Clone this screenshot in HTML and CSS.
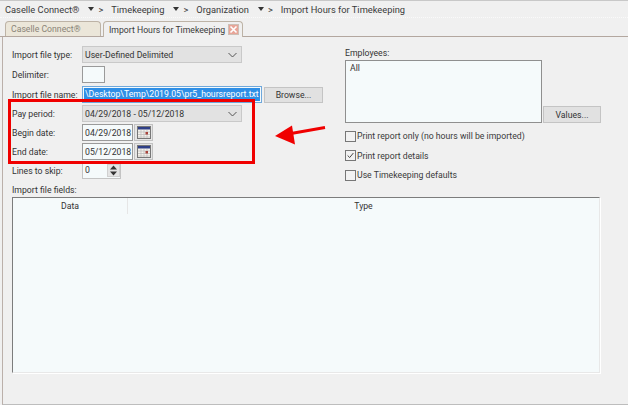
FILE: index.html
```html
<!DOCTYPE html>
<html lang="en">
<head>
<meta charset="utf-8">
<title>Import Hours for Timekeeping</title>
<link rel="stylesheet" href="styles.css">
</head>
<body>
<div class="window">
  <nav class="crumbs">
    <span class="crumb">Caselle Connect®</span><span class="caret"></span><span class="gt">&gt;</span>
    <span class="crumb">Timekeeping</span><span class="caret"></span><span class="gt">&gt;</span>
    <span class="crumb">Organization</span><span class="caret"></span><span class="gt">&gt;</span>
    <span class="crumb">Import Hours for Timekeeping</span>
  </nav>
  <div class="tabs">
    <div class="tab tab-off">Caselle Connect®</div>
    <div class="tab tab-on">Import Hours for Timekeeping
      <span class="close"><svg width="9" height="9" viewBox="0 0 9 9"><path d="M1.5 1.5l6 6M7.5 1.5l-6 6" stroke="#fff" stroke-width="1.6"/></svg></span>
    </div>
  </div>
  <main class="panel">
    <div class="top">
      <div class="left">
        <div class="row row-type">
          <label class="lbl">Import file type:</label>
          <div class="select"><span>User-Defined Delimited</span><svg class="chev" width="9" height="6" viewBox="0 0 9 6"><path d="M.5 1l4 4 4-4" fill="none" stroke="#555" stroke-width="1"/></svg></div>
        </div>
        <div class="row row-delim">
          <label class="lbl">Delimiter:</label>
          <div class="input delim"></div>
        </div>
        <div class="row row-file">
          <label class="lbl">Import file name:</label>
          <div class="input filename"><span class="sel">\Desktop\Temp\2019.05\pr5_hoursreport.txt</span></div>
          <button class="btn browse">Browse...</button>
        </div>
        <div class="row row-pay">
          <label class="lbl">Pay period:</label>
          <div class="select"><span>04/29/2018 - 05/12/2018</span><svg class="chev" width="9" height="6" viewBox="0 0 9 6"><path d="M.5 1l4 4 4-4" fill="none" stroke="#555" stroke-width="1"/></svg></div>
        </div>
        <div class="row row-date">
          <label class="lbl">Begin date:</label>
          <div class="input date">04/29/2018</div>
          <button class="calbtn"><svg width="14" height="13" viewBox="0 0 14 13"><rect x=".5" y=".5" width="13" height="12" fill="#f4f2ec" stroke="#777"/><rect x="1" y="1" width="12" height="2.5" fill="#2f3f86"/><path d="M1 6h12M1 8.500h12M1 11h12M4 4v8M7 4v8M10 4v8" stroke="#b9b9b9" stroke-width=".7"/><rect x="8.500" y="6" width="2.500" height="2.500" fill="#a8433a"/></svg></button>
        </div>
        <div class="row row-date">
          <label class="lbl">End date:</label>
          <div class="input date">05/12/2018</div>
          <button class="calbtn"><svg width="14" height="13" viewBox="0 0 14 13"><rect x=".5" y=".5" width="13" height="12" fill="#f4f2ec" stroke="#777"/><rect x="1" y="1" width="12" height="2.5" fill="#2f3f86"/><path d="M1 6h12M1 8.500h12M1 11h12M4 4v8M7 4v8M10 4v8" stroke="#b9b9b9" stroke-width=".7"/><rect x="8.500" y="6" width="2.500" height="2.500" fill="#a8433a"/></svg></button>
        </div>
        <div class="row row-skip">
          <label class="lbl">Lines to skip:</label>
          <div class="spin">
            <span class="spin-val">0</span>
            <span class="spin-btns">
              <svg width="7" height="5" viewBox="0 0 7 5"><path d="M3.500 .5L7 4.500H0z" fill="#333"/></svg>
              <svg width="7" height="5" viewBox="0 0 7 5"><path d="M3.500 4.500L7 .5H0z" fill="#333"/></svg>
            </span>
          </div>
        </div>
      </div>
      <div class="right">
        <div class="emp-label">Employees:</div>
        <div class="emp-row">
          <div class="listbox">All</div>
          <button class="btn values">Values...</button>
        </div>
        <div class="checks">
          <div class="check"><span class="box"></span>Print report only (no hours will be imported)</div>
          <div class="check"><span class="box"><svg width="11" height="11" viewBox="0 0 11 11"><path d="M2 5.500l2.500 2.500L9 2.500" fill="none" stroke="#444" stroke-width="1.200"/></svg></span>Print report details</div>
          <div class="check"><span class="box"></span>Use Timekeeping defaults</div>
        </div>
      </div>
    </div>
    <div class="fields-label">Import file fields:</div>
    <div class="grid">
      <div class="grid-head">
        <div class="col-data">Data</div>
        <div class="col-type">Type</div>
      </div>
    </div>
  </main>
  <div class="callout"></div>
  <svg class="arrow" width="56" height="26" viewBox="0 0 56 26"><path d="M52 4.500L18 10.500" stroke="#f00000" stroke-width="3"/><path d="M2 13L19 2.500l3 19z" fill="#f00000"/></svg>
</div>
</body>
</html>
```

FILE: styles.css
```css
* { box-sizing: border-box; }
html, body { margin: 0; padding: 0; }
body { width: 628px; height: 405px; overflow: hidden; background: #f0f0f0; }
.window {
  position: relative;
  width: 628px;
  height: 405px;
  display: flex;
  flex-direction: column;
  font-family: "Roboto", "Liberation Sans", sans-serif;
  font-size: 8.700px;
  white-space: nowrap;
  color: #333;
  background: #f0f0f0;
  border-top: 1px solid #c8c8c8;
}
.crumbs {
  height: 17px;
  padding-left: 5px;
  display: flex;
  align-items: center;
  font-size: 9.300px;
  color: #3a3a3a;
  border-bottom: 1px dotted #fafafa;
  flex: none;
}
.caret {
  width: 0; height: 0;
  margin-left: 9px;
  border-left: 3.500px solid transparent;
  border-right: 3.500px solid transparent;
  border-top: 4px solid #333;
}
.gt { margin: 0 8px 0 4px; }
.tabs {
  height: 19px;
  padding-left: 5px;
  display: flex;
  align-items: flex-end;
  gap: 2px;
  flex: none;
  border-bottom: 1px solid #b3a79f;
}
.tab {
  display: flex;
  align-items: center;
  height: 16px;
  border: 1px solid #bdb3a6;
  border-bottom: 0;
  border-radius: 4px 4px 0 0;
  padding: 0 3px 0 5px;
}
.tab-off { width: 96px; color: #8a8478; background: #ebe6d9; height: 15px; }
.tab-on { width: 140px; height: 16px; background: #f0f0f0; color: #3a3a3a; margin-bottom: -1px; justify-content: space-between; }
.close {
  width: 11px; height: 11px;
  display: flex; align-items: center; justify-content: center;
  background: #e8a598;
  border: 1px solid #cdbfb6;
}
.panel {
  flex: 1;
  margin-left: 2px;
  padding: 9px 0 0 9px;
  border-left: 1px solid #bbb0aa;
  border-bottom: 1px solid #bdbdbd;
  display: flex;
  flex-direction: column;
}
.top { display: flex; height: 135px; flex: none; }
.left { width: 333px; flex: none; display: flex; flex-direction: column; }
.row { display: flex; align-items: center; flex: none; }
.lbl { width: 70px; flex: none; }
.row-type { height: 17px; margin-bottom: 3px; }
.row-delim { height: 17px; margin-bottom: 3px; }
.row-file { height: 17px; margin-bottom: 2px; }
.row-pay { height: 17px; margin-bottom: 2px; }
.row-date { height: 17px; margin-bottom: 2px; }
.row-skip { height: 17px; }
.select {
  width: 160px; height: 100%;
  background: #e2e2e2;
  border: 1px solid #c9c9c9;
  display: flex;
  align-items: center;
  justify-content: space-between;
  padding: 0 4px 0 2px;
}
.input {
  background: #f5fafb;
  border: 1px solid #9a9a9a;
  height: 100%;
}
.delim { width: 23px; }
.filename {
  width: 180px;
  padding: 1px;
  overflow: hidden;
  border-color: #6fa8dc;
  display: flex;
  align-items: center;
}
.sel {
  background: #2f8fe6;
  color: #fff;
  white-space: nowrap;
  line-height: 13px;
  padding-left: 1px;
  flex: 1;
}
.btn {
  font: inherit;
  color: #333;
  background: #e1e1e1;
  border: 1px solid #c4c4c4;
  padding: 0;
}
.browse { width: 59px; height: 16px; margin-left: 2px; }
.date {
  width: 51px;
  display: flex;
  align-items: center;
  padding-left: 2px;
}
.calbtn {
  width: 19px; height: 100%;
  margin-left: 1px;
  padding: 0;
  background: #e6e6e6;
  border: 1px solid #c2c2c2;
  display: flex;
  align-items: center;
  justify-content: center;
}
.spin {
  width: 39px; height: 100%;
  background: #f5fafb;
  border: 1px solid #c4c4c4;
  display: flex;
  justify-content: space-between;
}
.spin-val { padding-left: 2px; line-height: 15px; }
.spin-btns {
  width: 13px;
  margin: 1px 0 1px 0;
  background: #e4e4e4;
  border: 1px solid #d0d0d0;
  display: flex;
  flex-direction: column;
  align-items: center;
  justify-content: space-around;
}
.right { flex: 1; padding-right: 28px; }
.emp-label { height: 14px; line-height: 14px; }
.emp-row { display: flex; align-items: flex-end; }
.listbox {
  width: 197px; height: 63px;
  background: #f5fafb;
  border: 1px solid #8f8f8f;
  padding: 2px 4px;
}
.values { width: 58px; height: 17px; margin-left: 1px; }
.checks { margin-top: 7px; display: flex; flex-direction: column; gap: 7.500px; }
.check { display: flex; align-items: center; height: 12px; color: #3a3a3a; }
.box {
  width: 11px; height: 11px;
  flex: none;
  margin-right: 1px;
  background: #f2f2f2;
  border: 1px solid #777;
  display: flex;
  align-items: center;
  justify-content: center;
}
.fields-label { height: 13px; line-height: 13px; margin-top: 3px; flex: none; }
.grid {
  width: 588px;
  height: 176px;
  flex: none;
  background: #f5fafb;
  border-top: 1px solid #7c7c7c;
  border-left: 1px solid #7c7c7c;
  border-right: 1px solid #e8e8e8;
  border-bottom: 1px solid #e8e8e8;
  box-shadow: 1px 1px 0 #fff;
}
.grid-head { display: flex; height: 16px; line-height: 16px; }
.col-data { width: 115px; text-align: center; border-right: 1px solid #e6e6e6; }
.col-type { flex: 1; text-align: center; }
.callout {
  position: absolute;
  left: 8px; top: 98px;
  width: 247px; height: 65px;
  border: 3px solid #f00000;
  pointer-events: none;
}
.arrow { position: absolute; left: 273px; top: 122px; }
```
